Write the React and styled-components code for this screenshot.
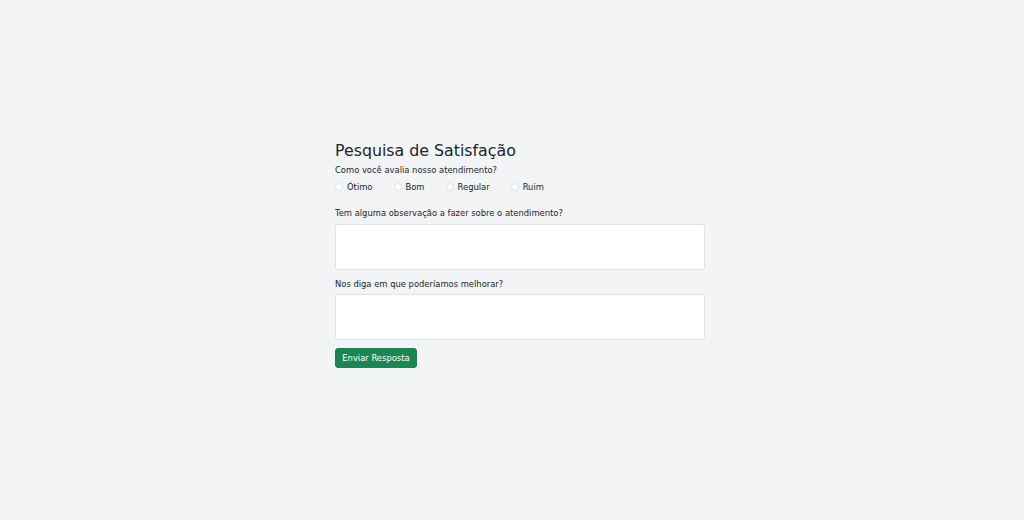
import React from 'react';
import styled, { createGlobalStyle } from 'styled-components';

const GlobalStyle = createGlobalStyle`
  html, body {
    margin: 0;
    padding: 0;
    background-color: #f3f4f6;
  }

  body {
    font-family: "DejaVu Sans", Verdana, sans-serif;
    color: #212529;
  }
`;

const options = ['Ótimo', 'Bom', 'Regular', 'Ruim'];

const App = () => (
  <Page>
    <GlobalStyle />
    <Form onSubmit={e => e.preventDefault()}>
      <Title>Pesquisa de Satisfação</Title>

      <Label>Como você avalia nosso atendimento?</Label>
      <RadioRow>
        {options.map(option =>
          <RadioItem key={option}>
            <Radio type="radio" name="avaliacao" value={option} />
            {option}
          </RadioItem>
        )}
      </RadioRow>

      <Field>
        <Label htmlFor="observacao">Tem alguma observação a fazer sobre o atendimento?</Label>
        <TextArea id="observacao" />
      </Field>

      <Field>
        <Label htmlFor="melhoria">Nos diga em que poderíamos melhorar?</Label>
        <TextArea id="melhoria" />
      </Field>

      <SubmitButton type="submit">Enviar Resposta</SubmitButton>
    </Form>
  </Page>
);

const Page = styled.div`
  min-height: 520px;
  display: flex;
  justify-content: center;
  padding: 142px 0 0 16px;
  box-sizing: border-box;
`;

const Form = styled.form`
  width: 370px;
  display: flex;
  flex-direction: column;
  align-items: flex-start;
`;

const Title = styled.h3`
  margin: 0 0 3px;
  font-size: 15.8px;
  font-weight: 400;
  line-height: 1.2;
`;

const Label = styled.label`
  display: block;
  font-size: 8.4px;
  line-height: 12.6px;
  margin-bottom: 4px;
`;

const RadioRow = styled.div`
  display: flex;
  gap: 21px;
  margin-bottom: 14px;
`;

const RadioItem = styled.label`
  display: flex;
  align-items: center;
  gap: 4px;
  font-size: 8.4px;
  line-height: 12.6px;
`;

const Radio = styled.input`
  appearance: none;
  margin: 0;
  width: 8px;
  height: 8px;
  border: 1px solid #dee2e6;
  border-radius: 50%;
  background-color: #fff;
  box-sizing: border-box;
`;

const Field = styled.div`
  width: 100%;
  margin-bottom: 8px;
`;

const TextArea = styled.textarea`
  display: block;
  width: 100%;
  height: 46px;
  box-sizing: border-box;
  border: 1px solid #dee2e6;
  border-radius: 3px;
  background-color: #fff;
  resize: none;
  font: inherit;
`;

const SubmitButton = styled.button`
  font-family: inherit;
  font-size: 8.4px;
  line-height: 12.6px;
  padding: 3px 6.3px;
  height: 20px;
  color: #fff;
  background-color: #198754;
  border: 1px solid #198754;
  border-radius: 3px;
  cursor: pointer;
`;

export default App;
